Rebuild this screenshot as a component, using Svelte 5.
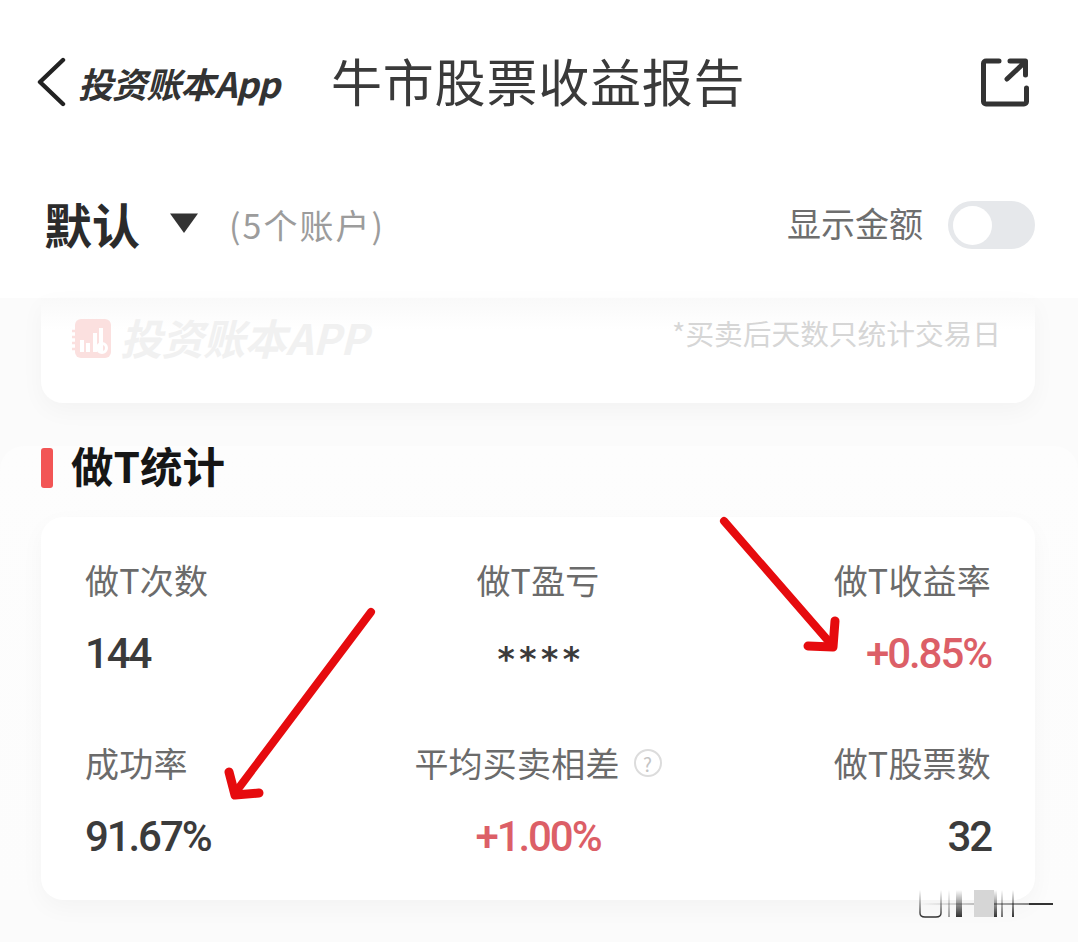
<script>
  const cells = [
    { label: '做T次数', value: '144', align: 'left', tone: '' },
    { label: '做T盈亏', value: '****', align: 'center', tone: 'mask' },
    { label: '做T收益率', value: '+0.85%', align: 'right', tone: 'up' },
    { label: '成功率', value: '91.67%', align: 'left', tone: '' },
    { label: '平均买卖相差', value: '+1.00%', align: 'center', tone: 'up', help: true },
    { label: '做T股票数', value: '32', align: 'right', tone: '' }
  ];
  const bars = [
    { x: 29, w: 2, o: 0.45 },
    { x: 37, w: 6, o: 1 },
    { x: 75, w: 3, o: 1 },
    { x: 82, w: 2, o: 0.7 },
    { x: 93, w: 2, o: 1 }
  ];
</script>

<div class="page">
  <header class="head">
    <div class="nav">
      <svg class="back" viewBox="0 0 30 50" aria-hidden="true">
        <path d="M27 3 4 25l23 22" fill="none" stroke="#222" stroke-width="4.4" stroke-linecap="round" stroke-linejoin="round" />
      </svg>
      <span class="brand">投资账本App</span>
      <h1>牛市股票收益报告</h1>
      <svg class="share" viewBox="0 0 48 49" aria-hidden="true">
        <path d="M18 3H5a2.500 2.500 0 0 0-2.500 2.500v38A2.500 2.500 0 0 0 5 46h38a2.500 2.500 0 0 0 2.500-2.500V30" fill="none" stroke="#333" stroke-width="5" stroke-linecap="round" />
        <path d="M26 21 44 4M29 3h15.500v14" fill="none" stroke="#333" stroke-width="5" stroke-linecap="round" stroke-linejoin="round" />
      </svg>
    </div>
    <div class="account">
      <strong>默认</strong>
      <svg class="caret" viewBox="0 0 30 22" aria-hidden="true"><path d="M1 1.500h28L15 21z" fill="#333" /></svg>
      <span class="count">(5个账户)</span>
      <span class="show">显示金额</span>
      <span class="toggle"><span class="knob"></span></span>
    </div>
  </header>

  <main class="body">
    <section class="card notice">
      <div class="mark">
        <svg viewBox="0 0 40 40" aria-hidden="true">
          <rect x="3" y="0" width="36" height="39" rx="6" fill="#fbe0df" />
          <path d="M0 12h4M0 18h4M0 24h4M0 30h4" stroke="#fbe0df" stroke-width="2.500" />
          <path d="M10 33V21M16 33V24M23 33V14M29 33V9" stroke="#fff" stroke-width="4" />
          <circle cx="30" cy="29" r="4.500" fill="none" stroke="#fff" stroke-width="3" />
        </svg>
        <span>投资账本APP</span>
      </div>
      <span class="note">*买卖后天数只统计交易日</span>
    </section>

    <section class="stats">
      <h2><i></i><span>做T统计</span></h2>
      <div class="card grid">
        {#each cells as c}
          <div class="cell {c.align}">
            <div class="label">
              {c.label}
              {#if c.help}<span class="help">?</span>{/if}
            </div>
            <div class="value {c.tone}">{c.value}</div>
          </div>
        {/each}
      </div>
    </section>
  </main>

  <svg class="arrows" viewBox="0 0 1078 942" aria-hidden="true">
    <g fill="none" stroke="#e60b0e" stroke-linecap="round" stroke-linejoin="round">
      <path d="M724 521 831 644" stroke-width="8" />
      <path d="M835 621 833 647 808 646" stroke-width="9" />
      <path d="M371 612 235 793" stroke-width="8" />
      <path d="M229 772 235 795 259 793" stroke-width="9" />
    </g>
  </svg>

  <svg class="glitch" viewBox="0 0 140 34" aria-hidden="true">
    <defs>
      <linearGradient id="fade" x1="0" y1="0" x2="0" y2="1">
        <stop offset="0" stop-color="#000" stop-opacity="0" />
        <stop offset="1" stop-color="#000" stop-opacity=".8" />
      </linearGradient>
      <linearGradient id="haze" x1="0" y1="0" x2="1" y2="0">
        <stop offset="0" stop-color="#000" stop-opacity="0" />
        <stop offset="1" stop-color="#000" stop-opacity=".45" />
      </linearGradient>
    </defs>
    <rect x="0" y="15" width="110" height="2" fill="url(#haze)" />
    <path d="M1 2v23q0 4 5 4h11q5 0 5-4V2" fill="none" stroke="url(#fade)" stroke-width="1.500" />
    <rect x="55" y="2" width="20" height="27" fill="#d6d6d6" />
    {#each bars as b}
      <rect x={b.x} y="2" width={b.w} height="27" fill="url(#fade)" opacity={b.o} />
    {/each}
    <rect x="110" y="15" width="24" height="2" fill="#333" />
  </svg>
</div>

<style>
  :global(body) {
    margin: 0;
    background: #fff;
  }

  .page {
    position: relative;
    width: 1078px;
    height: 942px;
    overflow: hidden;
    background: #fbfbfb;
    font-family: "Noto Sans CJK SC", "Noto Sans", sans-serif;
    color: #333;
  }

  .head {
    background: #fff;
    height: 298px;
  }

  .nav {
    display: flex;
    align-items: center;
    height: 164px;
    padding-left: 36px;
    padding-right: 49px;
  }

  .back {
    width: 30px;
    height: 50px;
    flex: none;
  }

  .brand {
    margin-left: 12px;
    width: 253px;
    flex: none;
    font-size: 35px;
    font-weight: 700;
    font-style: italic;
    white-space: nowrap;
    letter-spacing: -0.9px;
    color: #333;
  }

  h1 {
    margin: -4px 0 0;
    font-size: 51px;
    font-weight: 400;
    letter-spacing: 0.8px;
    color: #3a3a3a;
    white-space: nowrap;
  }

  .share {
    margin-left: auto;
    width: 48px;
    height: 49px;
    flex: none;
  }

  .account {
    display: flex;
    align-items: center;
    height: 122px;
    padding: 0 43px 0 44px;
  }

  .account strong {
    margin-top: -4px;
    font-size: 48px;
    font-weight: 700;
    color: #2b2b2b;
  }

  .caret {
    width: 30px;
    height: 22px;
    margin: -4px 0 0 29px;
  }

  .count {
    margin: -2px 0 0 30px;
    font-size: 34px;
    letter-spacing: 2px;
    color: #9c9c9c;
  }

  .show {
    margin: -5px 0 0 auto;
    font-size: 34px;
    color: #6e6e6e;
  }

  .toggle {
    display: flex;
    align-items: center;
    box-sizing: border-box;
    width: 87px;
    height: 48px;
    margin-left: 25px;
    padding-left: 5px;
    border-radius: 24px;
    background: #e6e8eb;
  }

  .knob {
    width: 39px;
    height: 39px;
    border-radius: 50%;
    background: #fff;
  }

  .body {
    padding: 0 43px 0 41px;
  }

  .card {
    background: #fff;
    border-radius: 22px;
    box-shadow: 0 8px 24px rgba(0, 0, 0, 0.035);
  }

  .notice {
    display: flex;
    justify-content: space-between;
    height: 105px;
    box-sizing: border-box;
    padding: 14px 34px 0 31px;
    border-radius: 0 0 22px 22px;
    background: linear-gradient(#f9f9f9, #fff 30%);
  }

  .mark {
    display: flex;
    align-items: flex-start;
    gap: 8px;
  }

  .mark svg {
    width: 40px;
    height: 40px;
    margin-top: 7px;
  }

  .mark span {
    font-size: 42px;
    line-height: 50px;
    font-weight: 700;
    font-style: italic;
    letter-spacing: -0.5px;
    color: #f1f1f1;
    white-space: nowrap;
  }

  .note {
    font-size: 28.700px;
    line-height: 42px;
    color: #d6d6d6;
    white-space: nowrap;
  }

  .stats {
    position: relative;
    margin: 43px -43px 0 -41px;
    padding: 2px 43px 0 41px;
    border-radius: 24px 24px 0 0;
    background: linear-gradient(#fdfdfd, #fcfcfc);
  }

  h2 {
    display: flex;
    align-items: center;
    gap: 18px;
    height: 40px;
    margin: 0 0 29px;
    font-size: 42.500px;
    font-weight: 700;
    color: #161616;
  }

  h2 span {
    margin-top: -8px;
  }

  h2 i {
    width: 12px;
    height: 40px;
    border-radius: 3px;
    background: #f25555;
  }

  .grid {
    display: grid;
    grid-template-columns: repeat(3, 1fr);
    row-gap: 65px;
    height: 383px;
    box-sizing: border-box;
    padding: 41px 44px;
  }

  .cell {
    display: flex;
    flex-direction: column;
    gap: 29px;
  }

  .cell.center {
    align-items: center;
    text-align: center;
  }

  .cell.right {
    align-items: flex-end;
    text-align: right;
  }

  .label {
    display: flex;
    align-items: center;
    gap: 14px;
    height: 44px;
    font-size: 34px;
    line-height: 44px;
    letter-spacing: 0.2px;
    color: #6b6b6b;
    white-space: nowrap;
  }

  .help {
    display: flex;
    align-items: center;
    justify-content: center;
    box-sizing: border-box;
    width: 28px;
    height: 28px;
    border: 2px solid #dcdcdc;
    border-radius: 50%;
    font-size: 19px;
    line-height: 1;
    color: #c4c4c4;
  }

  .value {
    height: 44px;
    font-family: Roboto, "Noto Sans", sans-serif;
    font-size: 42px;
    line-height: 45px;
    font-weight: 500;
    letter-spacing: -2.100px;
    color: #3b3b3b;
    white-space: nowrap;
  }

  .value.up {
    color: #dc5f67;
  }

  .value.mask {
    padding-left: 6px;
    font-family: "DejaVu Sans", sans-serif;
    font-size: 33px;
    font-weight: 700;
    line-height: 58px;
    letter-spacing: 4.500px;
  }

  .arrows {
    position: absolute;
    inset: 0;
    width: 1078px;
    height: 942px;
    pointer-events: none;
  }

  .glitch {
    position: absolute;
    left: 919px;
    top: 888px;
    width: 140px;
    height: 34px;
  }
</style>
